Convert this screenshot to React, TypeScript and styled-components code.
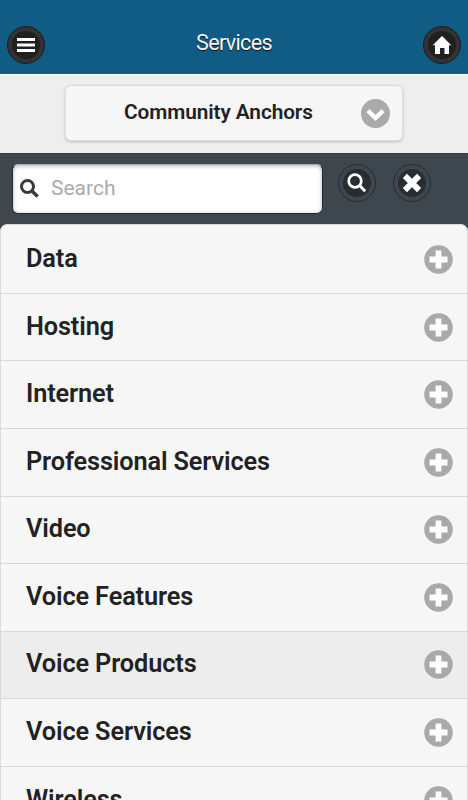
import React from 'react';
import styled, { createGlobalStyle } from 'styled-components';

const GlobalStyle = createGlobalStyle`
  * { box-sizing: border-box; }
  html, body { margin: 0; padding: 0; overflow: hidden; }
  body { font-family: Roboto, "Liberation Sans", sans-serif; color: #222; background: #3e474e; }
  button { font: inherit; padding: 0; cursor: pointer; }
`;

const Screen = styled.div`
  display: flex;
  flex-direction: column;
  width: 468px;
  height: 800px;
  overflow: hidden;
  background: #3e474e;
`;

const Header = styled.header`
  flex: none;
  display: flex;
  justify-content: space-between;
  height: 74px;
  padding: 26px 7px 0;
  background: #105c84;
  border-bottom: 1px solid #3d5260;
`;

const Title = styled.h1`
  margin: 4px 0 0;
  font-size: 21.6px;
  line-height: 26px;
  font-weight: 400;
  letter-spacing: -0.7px;
  color: #f4f4f4;
  text-shadow: 0 1px 1px #111;
`;

const RoundButton = styled.button<{ $ghost?: boolean }>`
  flex: none;
  display: flex;
  align-items: center;
  justify-content: center;
  width: 38px;
  height: 38px;
  border-radius: 50%;
  border: 1px solid ${p => (p.$ghost ? '#242b31' : '#1d1d1b')};
  background: ${p => (p.$ghost ? 'transparent' : '#333')};
`;

const Disc = styled.svg`
  display: block;
  width: 28px;
  height: 28px;
`;

const FilterBar = styled.section`
  flex: none;
  display: flex;
  justify-content: center;
  height: 79px;
  padding-top: 10px;
  background: #eee;
  border-top: 1px solid #fafafa;
`;

const Select = styled.button`
  display: flex;
  align-items: center;
  width: 338px;
  height: 56px;
  padding: 0 12px 0 58px;
  background: #f6f6f6;
  border: 1px solid #ddd;
  border-radius: 6px;
  box-shadow: 0 1px 3px rgba(0, 0, 0, 0.2);
  color: #222;
  text-shadow: 0 1px 0 #f3f3f3;
`;

const SelectLabel = styled.span`
  flex: 1;
  margin-bottom: 2px;
  text-align: left;
  white-space: nowrap;
  font-size: 20.8px;
  line-height: 26px;
  font-weight: 600;
  letter-spacing: -0.08px;
`;

const Mark = styled.svg`
  flex: none;
  display: block;
  width: 29px;
  height: 29px;
`;

const SearchBar = styled.section`
  flex: none;
  display: flex;
  height: 71px;
  padding: 10px 36px 0 12px;
  background: #3e474e;
  border-top: 1px solid #343d43;
`;

const SearchField = styled.label`
  display: flex;
  align-items: center;
  width: 311px;
  height: 50px;
  margin-right: 15px;
  padding: 0 0 2px 7px;
  background: #fff;
  border: 1px solid #1c2b37;
  border-top-color: #aaa;
  border-radius: 6px;
  box-shadow: inset 0 1px 4px rgba(0, 0, 0, 0.3);
`;

const SearchInput = styled.input`
  width: 250px;
  margin-left: 12px;
  padding: 0;
  border: 0;
  outline: 0;
  background: transparent;
  font: 400 21px/26px Roboto, sans-serif;
  &::placeholder { color: #aaa; opacity: 1; }
`;

const Actions = styled.div`
  display: flex;
  gap: 17px;
`;

const List = styled.ul`
  flex: none;
  margin: 0;
  padding: 1.4px 0 0;
  list-style: none;
  border: 1px solid #dadada;
  border-radius: 7px 7px 0 0;
  overflow: hidden;
  background: #f6f6f6;
`;

const Row = styled.li<{ $active?: boolean }>`
  display: flex;
  align-items: center;
  justify-content: space-between;
  height: 67.55px;
  padding: 0 14.5px 0 25px;
  border-bottom: 1px solid #d9d9d9;
  background: ${p => (p.$active ? '#ededed' : '#f6f6f6')};
`;

const RowLabel = styled.span`
  margin-bottom: 1px;
  font-size: 25.3px;
  line-height: 32px;
  font-weight: 600;
  letter-spacing: -0.12px;
  color: #222;
`;

const services: { name: string; active?: boolean }[] = [
  { name: 'Data' },
  { name: 'Hosting' },
  { name: 'Internet' },
  { name: 'Professional Services' },
  { name: 'Video' },
  { name: 'Voice Features' },
  { name: 'Voice Products', active: true },
  { name: 'Voice Services' },
  { name: 'Wireless' },
];

const MenuIcon = () => (
  <Disc viewBox="0 0 28 28">
    <circle cx="14" cy="14" r="14" fill="#202020" />
    <path d="M5 8.5H23M5 14H23M5 19.5H23" stroke="#fff" strokeWidth="3" />
  </Disc>
);

const HomeIcon = () => (
  <Disc viewBox="0 0 28 28">
    <circle cx="14" cy="14" r="14" fill="#202020" />
    <path d="M14 5L23.3 14.2H21V23H16.5V17H12V23H7V14.2H4.7Z" fill="#fff" />
  </Disc>
);

const FindIcon = () => (
  <Disc viewBox="0 0 28 28">
    <circle cx="14" cy="14" r="14" fill="#272d31" />
    <circle cx="12" cy="12" r="6.3" fill="none" stroke="#fff" strokeWidth="2.7" />
    <path d="M16.3 16.3L22.2 22.2" stroke="#fff" strokeWidth="3" />
  </Disc>
);

const ClearIcon = () => (
  <Disc viewBox="0 0 28 28">
    <circle cx="14" cy="14" r="14" fill="#272d31" />
    <path d="M6.9 6.9L21.1 21.1M21.1 6.9L6.9 21.1" stroke="#fff" strokeWidth="5.9" />
  </Disc>
);

const Magnifier = styled.svg`
  flex: none;
  width: 19px;
  height: 19px;
`;

const ChevronMark = () => (
  <Mark viewBox="0 0 29 29">
    <circle cx="14.5" cy="14.5" r="14.5" fill="#aaa" />
    <path d="M6.9 11.6L14.5 19L22.1 11.6" fill="none" stroke="#fff" strokeWidth="4.3" />
  </Mark>
);

const PlusMark = () => (
  <Mark viewBox="0 0 29 29">
    <circle cx="14.5" cy="14.5" r="14.3" fill="#a9a9a9" />
    <path d="M5.5 14.5H23.5M14.5 5.5V23.5" stroke="#fff" strokeWidth="5.8" />
  </Mark>
);

export default function App() {
  return (
    <Screen>
      <GlobalStyle />
      <Header>
        <RoundButton aria-label="Menu"><MenuIcon /></RoundButton>
        <Title>Services</Title>
        <RoundButton aria-label="Home"><HomeIcon /></RoundButton>
      </Header>
      <FilterBar>
        <Select>
          <SelectLabel>Community Anchors</SelectLabel>
          <ChevronMark />
        </Select>
      </FilterBar>
      <SearchBar>
        <SearchField>
          <Magnifier viewBox="0 0 19 19">
            <circle cx="7.5" cy="7.5" r="6" fill="none" stroke="#3a3a3a" strokeWidth="3" />
            <path d="M11.7 11.7L17.6 17.6" stroke="#3a3a3a" strokeWidth="3.5" />
          </Magnifier>
          <SearchInput placeholder="Search" aria-label="Search services" />
        </SearchField>
        <Actions>
          <RoundButton $ghost aria-label="Search"><FindIcon /></RoundButton>
          <RoundButton $ghost aria-label="Clear"><ClearIcon /></RoundButton>
        </Actions>
      </SearchBar>
      <List>
        {services.map(s => (
          <Row key={s.name} $active={s.active}>
            <RowLabel>{s.name}</RowLabel>
            <PlusMark />
          </Row>
        ))}
      </List>
    </Screen>
  );
}
